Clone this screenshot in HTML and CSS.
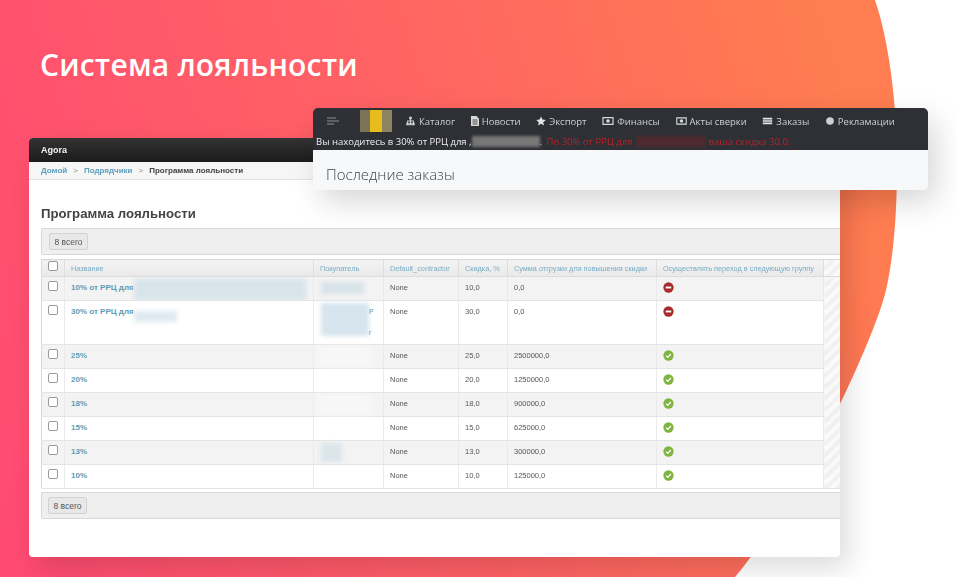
FILE: index.html
```html
<!DOCTYPE html>
<html lang="ru">
<head>
<meta charset="utf-8">
<title>Система лояльности</title>
<link rel="stylesheet" href="styles.css">
</head>
<body>
<div class="page">
  <div class="blob"></div>
  <h1 class="headline">Система лояльности</h1>

  <section class="admin">
    <div class="admin-top">Agora</div>
    <div class="crumbs"><a>Домой</a><span class="sep">&gt;</span><a>Подрядчики</a><span class="sep">&gt;</span><b>Программа лояльности</b></div>
    <h2 class="admin-title">Программа лояльности</h2>
    <div class="toolbar"><span class="count">8 всего</span></div>
    <table class="grid">
      <colgroup>
        <col class="c-check"><col class="c-name"><col class="c-buyer"><col class="c-def"><col class="c-disc"><col class="c-sum"><col class="c-next"><col class="c-fill">
      </colgroup>
      <thead>
        <tr>
          <th><input type="checkbox" class="cb"></th>
          <th>Название</th><th>Покупатель</th><th>Default_contractor</th><th>Скидка, %</th><th>Сумма отгрузки для повышения скидки</th><th>Осуществлять переход в следующую группу</th><th class="hatch"></th>
        </tr>
      </thead>
      <tbody>
        <tr class="alt r24">
          <td><input type="checkbox" class="cb"></td>
          <td class="nm"><a>10% от РРЦ для</a><i class="smudge s1"></i></td>
          <td class="bu"><i class="smudge s2"></i></td>
          <td>None</td><td>10,0</td><td>0,0</td>
          <td><svg class="ico" viewBox="0 0 12 12"><circle cx="6" cy="6" r="5.6" fill="#a92c2c"/><rect x="3" y="5" width="6" height="2" fill="#fff"/></svg></td>
          <td class="hatch" rowspan="8"></td>
        </tr>
        <tr class="r44">
          <td><input type="checkbox" class="cb"></td>
          <td class="nm"><a>30% от РРЦ для</a><i class="smudge s3"></i></td>
          <td class="bu"><i class="smudge s4"></i><span class="tick t1">Р</span><span class="tick t2">г</span></td>
          <td>None</td><td>30,0</td><td>0,0</td>
          <td><svg class="ico" viewBox="0 0 12 12"><circle cx="6" cy="6" r="5.6" fill="#a92c2c"/><rect x="3" y="5" width="6" height="2" fill="#fff"/></svg></td>
        </tr>
        <tr class="alt r24">
          <td><input type="checkbox" class="cb"></td>
          <td class="nm"><a>25%</a></td>
          <td class="bu"><i class="smudge s5"></i></td>
          <td>None</td><td>25,0</td><td>2500000,0</td>
          <td><svg class="ico" viewBox="0 0 12 12"><circle cx="6" cy="6" r="5.6" fill="#7fb53c"/><path d="M3.4 6.2 5.2 8 8.6 4.3" fill="none" stroke="#fff" stroke-width="1.4"/></svg></td>
        </tr>
        <tr class="r24">
          <td><input type="checkbox" class="cb"></td>
          <td class="nm"><a>20%</a></td>
          <td class="bu"></td>
          <td>None</td><td>20,0</td><td>1250000,0</td>
          <td><svg class="ico" viewBox="0 0 12 12"><circle cx="6" cy="6" r="5.6" fill="#7fb53c"/><path d="M3.4 6.2 5.2 8 8.6 4.3" fill="none" stroke="#fff" stroke-width="1.4"/></svg></td>
        </tr>
        <tr class="alt r24">
          <td><input type="checkbox" class="cb"></td>
          <td class="nm"><a>18%</a></td>
          <td class="bu"><i class="smudge s5"></i></td>
          <td>None</td><td>18,0</td><td>900000,0</td>
          <td><svg class="ico" viewBox="0 0 12 12"><circle cx="6" cy="6" r="5.6" fill="#7fb53c"/><path d="M3.4 6.2 5.2 8 8.6 4.3" fill="none" stroke="#fff" stroke-width="1.4"/></svg></td>
        </tr>
        <tr class="r24">
          <td><input type="checkbox" class="cb"></td>
          <td class="nm"><a>15%</a></td>
          <td class="bu"></td>
          <td>None</td><td>15,0</td><td>625000,0</td>
          <td><svg class="ico" viewBox="0 0 12 12"><circle cx="6" cy="6" r="5.6" fill="#7fb53c"/><path d="M3.4 6.2 5.2 8 8.6 4.3" fill="none" stroke="#fff" stroke-width="1.4"/></svg></td>
        </tr>
        <tr class="alt r24">
          <td><input type="checkbox" class="cb"></td>
          <td class="nm"><a>13%</a></td>
          <td class="bu"><i class="smudge s6"></i></td>
          <td>None</td><td>13,0</td><td>300000,0</td>
          <td><svg class="ico" viewBox="0 0 12 12"><circle cx="6" cy="6" r="5.6" fill="#7fb53c"/><path d="M3.4 6.2 5.2 8 8.6 4.3" fill="none" stroke="#fff" stroke-width="1.4"/></svg></td>
        </tr>
        <tr class="r24">
          <td><input type="checkbox" class="cb"></td>
          <td class="nm"><a>10%</a></td>
          <td class="bu"></td>
          <td>None</td><td>10,0</td><td>125000,0</td>
          <td><svg class="ico" viewBox="0 0 12 12"><circle cx="6" cy="6" r="5.6" fill="#7fb53c"/><path d="M3.4 6.2 5.2 8 8.6 4.3" fill="none" stroke="#fff" stroke-width="1.4"/></svg></td>
        </tr>
      </tbody>
    </table>
    <div class="toolbar bottom"><span class="count">8 всего</span></div>
  </section>

  <section class="shop">
    <div class="shop-dark">
      <nav class="shop-nav">
        <svg class="burger" viewBox="0 0 12 8"><path d="M0 1H9M0 4H12M0 7H7" stroke="#8d9096" stroke-width="1" fill="none"/></svg>
        <div class="logo"></div>
        <a class="nav-item"><svg class="w11" viewBox="0 0 12 12"><path d="M4.500 1h3v3h-1v1.500H10V8h1v3H8V8h1V6.500H6.500V8h1v3h-3V8h1V6.500H3V8h1v3H1V8h1V5.500h3.500V4h-1z" fill="#d8d8d8"/></svg>Каталог</a>
        <a class="nav-item"><svg class="w8" viewBox="0 0 8 10"><path d="M0 0h5.500L8 2.500V10H0z" fill="#d8d8d8"/><path d="M1.500 4h5M1.500 6h5M1.500 8h5" stroke="#2e3036" stroke-width=".8"/></svg>Новости</a>
        <a class="nav-item"><svg class="w10" viewBox="0 0 12 12"><path d="M6 .5 7.700 4.200 11.700 4.700 8.700 7.400 9.500 11.400 6 9.400 2.500 11.400 3.300 7.400.3 4.700 4.300 4.200z" fill="#e4e4e4"/></svg>Экспорт</a>
        <a class="nav-item"><svg class="w12" viewBox="0 0 14 12"><path d="M1 2h12v8H1z" fill="none" stroke="#d8d8d8" stroke-width="1.400"/><circle cx="7" cy="6" r="2.200" fill="#d8d8d8"/></svg>Финансы</a>
        <a class="nav-item"><svg class="w11" viewBox="0 0 14 12"><path d="M1 2h12v8H1z" fill="none" stroke="#d8d8d8" stroke-width="1.400"/><circle cx="7" cy="6" r="2.200" fill="#d8d8d8"/></svg>Акты сверки</a>
        <a class="nav-item"><svg class="w11" viewBox="0 0 14 12"><path d="M1 2h12v2H1zM1 5h12v2H1zM1 8h12v2H1z" fill="#e4e4e4"/></svg>Заказы</a>
        <a class="nav-item"><svg class="w10" viewBox="0 0 12 12"><circle cx="6" cy="6" r="4.600" fill="#d0d0d0"/></svg>Рекламации</a>
      </nav>
      <p class="status">Вы находитесь в 30% от РРЦ для ,<i class="hide grey"></i>. <span class="warn">По 30% от РРЦ для<i class="hide dark-red"></i>ваша скидка 30,0.</span></p>
    </div>
    <div class="shop-body">Последние заказы</div>
  </section>
</div>
</body>
</html>
```
FILE: styles.css
```css
* { box-sizing: border-box; }
html, body { margin: 0; padding: 0; background: #fff; }
.page { position: relative; width: 956px; height: 577px; overflow: hidden; background: #fff; padding: 46px 0 0 40px; font-family: "Liberation Sans", Arial, sans-serif; }
.blob { position: absolute; inset: 0; background: linear-gradient(72deg, #ff4a72 0%, #ff6463 50%, #ff7d50 88%); clip-path: path("M0 0H875C888 38 897 100 897 165C897 210 894 255 886 290C875 338 800 500 735 577H0Z"); }
.headline { position: relative; margin: 0; font-family: "Open Sans", sans-serif; font-size: 30px; line-height: 38px; font-weight: 600; letter-spacing: .2px; color: #fff; }

.admin { position: relative; width: 811px; height: 419px; margin: 54px 0 0 -11px; background: #fff; border-radius: 4px; box-shadow: 8px 12px 28px rgba(0,0,0,.14); overflow: hidden; color: #333; filter: blur(.3px); }
.admin-top { height: 24px; padding: 0 0 0 12px; background: linear-gradient(#333, #1c1c1c); color: #f4f4f4; font-size: 9px; font-weight: 700; line-height: 24px; }
.crumbs { display: flex; align-items: center; height: 18px; padding-left: 12px; background: #f6f6f6; border-bottom: 1px solid #e4e4e4; font-size: 8px; }
.crumbs a { color: #5f9fbc; font-weight: 700; }
.crumbs b { color: #444; }
.sep { margin: 0 6px; color: #888; font-size: 8px; }
.admin-title { margin: 25px 0 5px 12px; font-size: 13.2px; line-height: 18px; font-weight: 700; color: #444; }
.toolbar { display: flex; align-items: center; height: 27px; margin: 0 0 4px 12px; padding-left: 7px; background: #efefef; border: 1px solid #d8d8d8; border-right: 0; border-radius: 2px 0 0 2px; }
.toolbar.bottom { margin-top: 3px; padding-left: 6px; }
.count { display: flex; align-items: center; justify-content: center; width: 39px; height: 17px; background: #e8e8e8; border: 1px solid #d2d2d2; border-radius: 2px; font-size: 8.5px; color: #555; }

.grid { width: 799px; margin-left: 12px; border-collapse: collapse; table-layout: fixed; border: 1px solid #d9d9d9; border-right: 0; font-size: 7.5px; color: #555; }
.c-check { width: 23px; } .c-name { width: 249px; } .c-buyer { width: 70px; } .c-def { width: 75px; }
.c-disc { width: 49px; } .c-sum { width: 149px; } .c-next { width: 167px; } .c-fill { width: 17px; }
.grid th { height: 17px; padding: 0 0 0 6px; background: linear-gradient(#f4f4f4, #e9e9e9); border-right: 1px solid #dedede; border-bottom: 1px solid #dcdcdc; font-weight: 400; font-size: 7.3px; text-align: left; color: #78adc4; white-space: nowrap; }
.grid td { padding: 5px 0 0 6px; vertical-align: top; border-right: 1px solid #eaeaea; border-bottom: 1px solid #e4e4e4; line-height: 11px; background: #fff; }
.grid .alt td { background: #f3f3f3; }
.r24 { height: 24px; } .r44 { height: 44px; }
.grid td:first-child, .grid th:first-child { padding: 4px 0 0 6px; vertical-align: top; }
.grid th:first-child { padding-top: 1px; }
.nm { position: relative; font-weight: 700; font-size: 8px; }
.nm a { color: #5b9db3; }
.bu { position: relative; }
.cb { appearance: none; display: block; width: 10px; height: 10px; margin: 0; background: #fff; border: 1px solid #9a9a9a; border-radius: 2px; }
.ico { display: block; width: 11px; height: 11px; }
.grid .hatch, .grid .alt td.hatch { padding: 0; background: repeating-linear-gradient(135deg, #fafafa 0 4px, #f0f0f0 4px 8px); }

.smudge { position: absolute; display: block; filter: blur(2px); }
.s1 { left: 69px; top: 2px; width: 172px; height: 21px; background: #d7e4ea; }
.s2 { left: 7px; top: 5px; width: 43px; height: 12px; background: #d8e3e8; }
.s3 { left: 69px; top: 10px; width: 43px; height: 11px; background: #dfeaf0; }
.s4 { left: 7px; top: 2px; width: 48px; height: 33px; background: #d6e5ee; }
.s5 { left: 3px; top: 1px; width: 54px; height: 22px; background: #fafafa; filter: blur(3px); opacity: .6; }
.s6 { left: 7px; top: 2px; width: 21px; height: 19px; background: #dce6ea; }
.tick { position: absolute; left: 55px; font-size: 7px; color: #5b9db3; }
.t1 { top: 5px; } .t2 { top: 26px; }

.shop { position: absolute; left: 313px; top: 108px; width: 615px; height: 82px; border-radius: 5px; overflow: hidden; box-shadow: 8px 12px 30px rgba(0,0,0,.16); filter: blur(.3px); }
.shop-dark { height: 42px; background: #2e3036; }
.shop-nav { display: flex; align-items: center; gap: 15.6px; height: 26px; font-family: "Open Sans", sans-serif; font-size: 9.5px; color: #cfd0d2; }
.burger { width: 12px; height: 8px; margin-left: 14px; margin-right: 5.4px; }
.logo { width: 32px; height: 22px; margin-right: -2.6px; background: linear-gradient(90deg, #7a7355 0 31%, #e6bd1c 31% 69%, #8c8560 69%); filter: blur(.5px); }
.nav-item { display: flex; align-items: center; white-space: nowrap; }
.nav-item svg { height: 10px; margin-right: 3px; flex: none; }
.w8 { width: 8px; } .w10 { width: 10px; } .w11 { width: 11px; } .w12 { width: 12px; }
.status { display: flex; align-items: center; height: 14px; margin: 0; padding-left: 3px; font-family: "Open Sans", sans-serif; font-size: 9.5px; color: #f0f0f0; white-space: pre; }
.warn { display: inline-flex; align-items: center; margin-left: 2px; color: #b82226; }
.hide { display: inline-block; height: 11px; filter: blur(1.5px); }
.grey { width: 68px; background: #777; }
.dark-red { width: 70px; margin: 0 3px; background: #4f2a2e; }
.shop-body { height: 40px; padding: 14px 0 0 13px; background: #f7f8fa; font-family: "Open Sans", sans-serif; font-size: 15px; font-weight: 300; line-height: 21px; color: #444; }
```
